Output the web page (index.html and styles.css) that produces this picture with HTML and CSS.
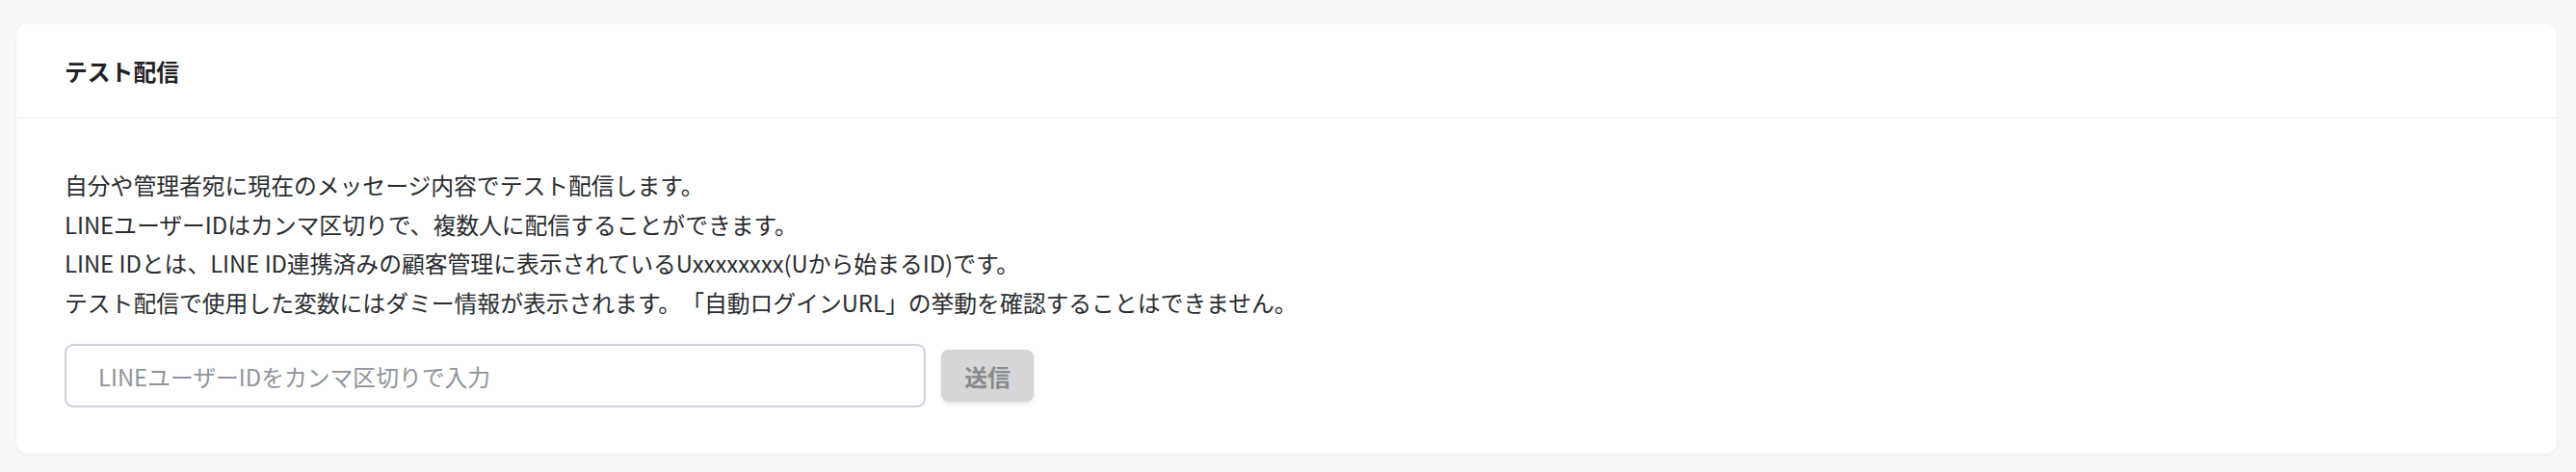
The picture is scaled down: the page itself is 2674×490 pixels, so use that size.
FILE: index.html
```html
<!DOCTYPE html>
<html lang="ja">
<head>
<meta charset="utf-8">
<title>テスト配信</title>
<link rel="stylesheet" href="styles.css">
</head>
<body>
<div class="page">
  <section class="card">
    <header class="card-header">
      <h2 class="card-title">テスト配信</h2>
    </header>
    <div class="card-body">
      <p class="desc">自分や管理者宛に現在のメッセージ内容でテスト配信します。<br>LINEユーザーIDはカンマ区切りで、複数人に配信することができます。<br>LINE IDとは、LINE ID連携済みの顧客管理に表示されているUxxxxxxxx(Uから始まるID)です。<br>テスト配信で使用した変数にはダミー情報が表示されます。「自動ログインURL」の挙動を確認することはできません。</p>
      <div class="form-row">
        <input class="id-input" type="text" placeholder="LINEユーザーIDをカンマ区切りで入力">
        <button class="send-btn" type="button" disabled>送信</button>
      </div>
    </div>
  </section>
</div>
</body>
</html>
```

FILE: styles.css
```css
* { box-sizing: border-box; }
html, body {
  margin: 0;
  padding: 0;
  background: #f7f8fa;
}
body {
  font-family: "Noto Sans CJK JP", "Noto Sans", sans-serif;
  color: #2a2c30;
  text-spacing-trim: space-all;
}
.page {
  padding: 25px 20px 19px 17px;
}
.card {
  background: #ffffff;
  border-radius: 12px;
  box-shadow: 0 1px 3px rgba(20, 30, 50, 0.06);
  height: 446px;
}
.card-header {
  padding: 28px 50px;
  border-bottom: 1px solid #eeeff2;
}
.card-title {
  margin: 0;
  font-size: 23.8px;
  line-height: 41px;
  font-weight: 700;
  color: #1f2227;
}
.card-body {
  padding: 49px 50px 48px;
}
.desc {
  margin: 0 0 23px;
  font-size: 23.8px;
  line-height: 40.5px;
  color: #2a2c30;
  text-spacing-trim: space-all;
}
.form-row {
  display: flex;
  align-items: center;
  gap: 16px;
}
.id-input {
  width: 894px;
  height: 66px;
  padding: 0 33px;
  border: 2px solid #cfd0da;
  border-radius: 9px;
  font-family: "Noto Sans CJK JP", "Noto Sans", sans-serif;
  font-size: 23.8px;
  color: #2a2c30;
  background: #fff;
  outline: none;
}
.id-input::placeholder {
  color: #8f949c;
}
.send-btn {
  width: 96px;
  height: 54px;
  padding: 0;
  border: none;
  border-radius: 8px;
  background: #d5d6d8;
  color: #898a8d;
  font-family: "Noto Sans CJK JP", "Noto Sans", sans-serif;
  font-size: 23.8px;
  font-weight: 700;
  box-shadow: 0 2px 4px rgba(0, 0, 0, 0.12);
}
```
